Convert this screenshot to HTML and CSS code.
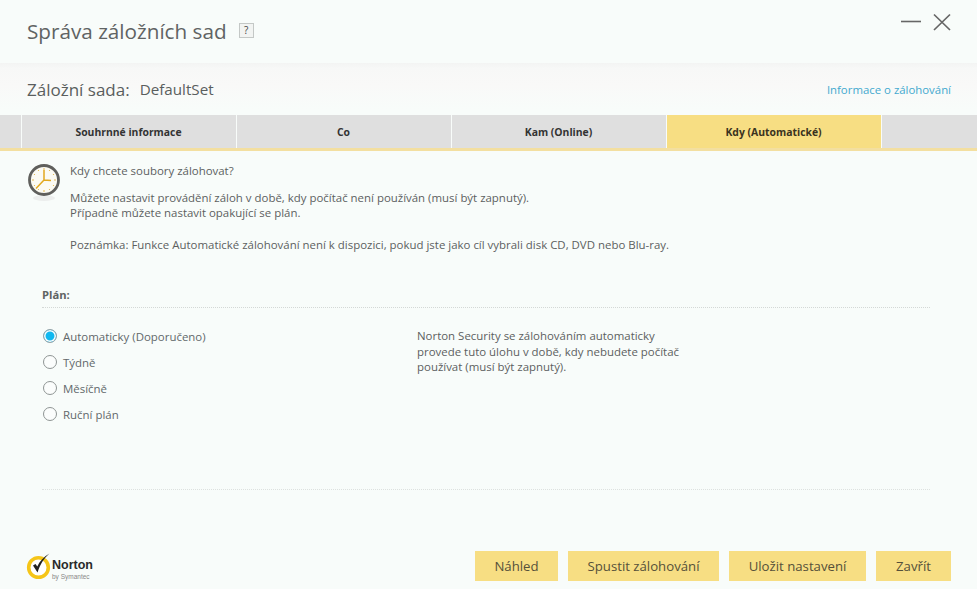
FILE: index.html
```html
<!DOCTYPE html>
<html lang="cs">
<head>
<meta charset="utf-8">
<title>Správa záložních sad</title>
<link rel="stylesheet" href="styles.css">
</head>
<body>
<div class="window">
  <header class="titlebar">
    <h1 class="title">Správa záložních sad</h1>
    <span class="help">?</span>
    <div class="winctl">
      <svg width="50" height="20" viewBox="0 0 50 20">
        <path d="M0 9.500H20" stroke="#666" stroke-width="1.600" fill="none"/>
        <path d="M33 2.500L49 18M49 2.500L33 18" stroke="#666" stroke-width="1.700" fill="none"/>
      </svg>
    </div>
  </header>
  <div class="setrow">
    <span class="setlabel">Záložní sada:</span>
    <span class="setname">DefaultSet</span>
    <a class="infolink">Informace o zálohování</a>
  </div>
  <nav class="tabs">
    <div class="tab stub"></div>
    <div class="tab">Souhrnné informace</div>
    <div class="tab">Co</div>
    <div class="tab">Kam (Online)</div>
    <div class="tab active">Kdy (Automatické)</div>
    <div class="tab rest"></div>
  </nav>
  <main class="content">
    <section class="intro">
      <svg class="clock" width="34" height="40" viewBox="0 0 34 40">
        <ellipse cx="17" cy="35" rx="11" ry="3" fill="#eceeed"/>
        <circle cx="17" cy="17" r="14.500" fill="#fbfaf2" stroke="#5f5f5c" stroke-width="2.800"/>
        <g fill="#e0b040">
          <circle cx="17" cy="6" r=".8"/><circle cx="17" cy="28" r=".8"/><circle cx="6" cy="17" r=".8"/><circle cx="28" cy="17" r=".8"/>
          <circle cx="11.500" cy="7.500" r=".6"/><circle cx="22.500" cy="7.500" r=".6"/><circle cx="7.500" cy="11.500" r=".6"/><circle cx="26.500" cy="11.500" r=".6"/>
          <circle cx="7.500" cy="22.500" r=".6"/><circle cx="26.500" cy="22.500" r=".6"/><circle cx="11.500" cy="26.500" r=".6"/><circle cx="22.500" cy="26.500" r=".6"/>
        </g>
        <path d="M17 7V17L24 17.500M17 17L9 25.500" stroke="#e2a81e" stroke-width="1.500" fill="none"/>
      </svg>
      <div class="introtext">
        <p class="q">Kdy chcete soubory zálohovat?</p>
        <p class="p2">Můžete nastavit provádění záloh v době, kdy počítač není používán (musí být zapnutý).<br>Případně můžete nastavit opakující se plán.</p>
        <p class="p3">Poznámka: Funkce Automatické zálohování není k dispozici, pokud jste jako cíl vybrali disk CD, DVD nebo Blu-ray.</p>
      </div>
    </section>
    <section class="plan">
      <h2 class="planhead">Plán:</h2>
      <div class="planbody">
        <div class="radios">
          <div class="radio on"><i></i>Automaticky (Doporučeno)</div>
          <div class="radio"><i></i>Týdně</div>
          <div class="radio"><i></i>Měsíčně</div>
          <div class="radio"><i></i>Ruční plán</div>
        </div>
        <p class="desc">Norton Security se zálohováním automaticky<br>provede tuto úlohu v době, kdy nebudete počítač<br>používat (musí být zapnutý).</p>
      </div>
    </section>
  </main>
  <footer class="footer">
    <div class="logo">
      <svg width="26" height="28" viewBox="0 0 26 28">
        <circle cx="12.500" cy="15.500" r="9.800" fill="#fff" stroke="#f5c518" stroke-width="3.600"/>
        <path d="M7 13.500L11.500 20.500C14 13 17.500 6.500 23.500 1.500C17.500 5 13.500 9.500 11.300 14.500L9.500 12Z" fill="#222"/>
      </svg>
      <div class="logotext"><b>Norton</b><span>by Symantec</span></div>
    </div>
    <div class="buttons">
      <button class="btn b1">Náhled</button>
      <button class="btn b2">Spustit zálohování</button>
      <button class="btn b3">Uložit nastavení</button>
      <button class="btn b4">Zavřít</button>
    </div>
  </footer>
</div>
</body>
</html>
```
FILE: styles.css
```css
* { box-sizing: border-box; }
html, body { margin: 0; padding: 0; }
body { background: #f8fcfa; font-family: "Open Sans", "Noto Sans", sans-serif; color: #555; }
.window { width: 977px; height: 589px; display: flex; flex-direction: column; overflow: hidden; }
.titlebar { height: 63px; display: flex; align-items: center; padding: 0 0 2px 27px; position: relative; flex: none; }
.title { margin: 0; font-size: 20.700px; font-weight: 400; color: #5f6363; }
.help { width: 15px; height: 15px; border: 1px solid #c4c8c6; background: #f2f4f2; font-size: 10px; color: #444; text-align: center; line-height: 13px; margin-left: 12px; }
.winctl { position: absolute; left: 901px; top: 12px; height: 20px; line-height: 0; }
.setrow { height: 52px; flex: none; display: flex; align-items: center; padding: 0 26px 0 27px; background: linear-gradient(#f3f4f3 0, #f7f8f7 5px, #f9f9f8 22px, #f8fcfa 46px); }
.setlabel { font-size: 17px; color: #5a5e5e; }
.setname { font-size: 15.200px; color: #5a5e5e; margin-left: 10px; }
.infolink { margin-left: auto; font-size: 11.400px; color: #43a9cf; }
.tabs { height: 36px; flex: none; display: flex; background: #dfdfdf; border-bottom: 3px solid #f3dfa0; }
.tab { width: 215px; flex: none; display: flex; align-items: center; justify-content: center; padding-right: 1px; font-size: 10.400px; font-weight: 700; color: #333; border-right: 1px solid #f8fcfa; }
.tab.stub { width: 22px; }
.tab.rest { flex: 1; border-right: 0; }
.tab.active { background: #f7de83; color: #3a3320; }
.content { flex: 1; display: flex; flex-direction: column; padding: 0 47px 0 27px; }
.intro { display: flex; height: 137px; padding-top: 12px; }
.clock { flex: none; margin-right: 9px; }
.introtext { font-size: 11.450px; color: #5c5f5f; }
.introtext p { margin: 0; line-height: 15px; }
.q { margin-bottom: 12px !important; }
.p3 { margin-top: 17px !important; }
.plan { padding-left: 15px; flex: 1; }
.planhead { margin: 0; height: 20px; font-size: 11.200px; font-weight: 700; color: #5f6363; border-bottom: 1px dotted #d4d8d6; line-height: 13px; }
.planbody { display: flex; height: 182px; padding-top: 15px; border-bottom: 1px dotted #dde1df; }
.radios { width: 375px; flex: none; padding-left: 1px; }
.radio { height: 26px; display: flex; align-items: center; font-size: 11.450px; color: #62686a; }
.radio i { width: 14px; height: 14px; border-radius: 50%; border: 1px solid #8f9594; background: #fbfdfc; margin-right: 6px; flex: none; }
.radio.on i { background: #10b8f0; border: 1px solid #9aa4a6; box-shadow: inset 0 0 0 1.500px #fff; }
.desc { margin: 0; font-size: 11.450px; line-height: 15.500px; color: #5c5f5f; padding-top: 5px; }
.footer { height: 49px; flex: none; display: flex; align-items: flex-start; justify-content: space-between; padding: 11px 26px 0 26px; margin-top: -9px; }
.logo { display: flex; align-items: center; }
.logotext { display: flex; flex-direction: column; margin-top: 7px; font-family: "Liberation Sans", sans-serif; }
.logotext b { font-size: 12.500px; line-height: 15px; color: #2a2a2a; }
.logotext span { font-size: 6.500px; line-height: 8px; color: #888; }
.buttons { display: flex; gap: 10px; }
.btn { height: 30px; border: 0; padding: 0; background: #f7de83; font-family: inherit; font-size: 13.200px; color: #55503a; }
.b1 { width: 83px; }
.b2 { width: 151px; }
.b3 { width: 137px; }
.b4 { width: 75px; }
```
